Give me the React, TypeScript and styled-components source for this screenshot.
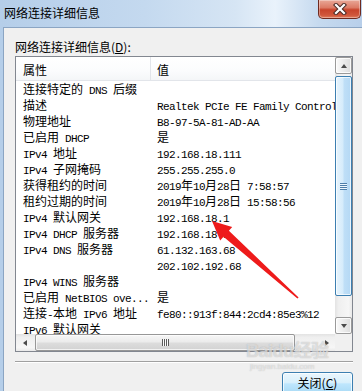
import React from "react";
import styled, { createGlobalStyle } from "styled-components";

const CJK = `"Noto Sans CJK SC", "Noto Sans", sans-serif`;

const GlobalStyle = createGlobalStyle`
  html, body { margin: 0; padding: 0; }
  body { width: 362px; height: 391px; overflow: hidden; background: #f0f0f0; }
`;

const rows: [string, string][] = [
  ["连接特定的 DNS 后缀", ""],
  ["描述", "Realtek PCIe FE Family Controller"],
  ["物理地址", "B8-97-5A-81-AD-AA"],
  ["已启用 DHCP", "是"],
  ["IPv4 地址", "192.168.18.111"],
  ["IPv4 子网掩码", "255.255.255.0"],
  ["获得租约的时间", "2019年10月28日 7:58:57"],
  ["租约过期的时间", "2019年10月28日 15:58:56"],
  ["IPv4 默认网关", "192.168.18.1"],
  ["IPv4 DHCP 服务器", "192.168.18.1"],
  ["IPv4 DNS 服务器", "61.132.163.68"],
  ["", "202.102.192.68"],
  ["IPv4 WINS 服务器", ""],
  ["已启用 NetBIOS ove...", "是"],
  ["连接-本地 IPv6 地址", "fe80::913f:844:2cd4:85e3%12"],
  ["IPv6 默认网关", ""],
];

const Frame = styled.div`
  position: relative;
  width: 362px;
  height: 391px;
  display: flex;
  flex-direction: column;
  overflow: hidden;
  font-family: ${CJK};
  background: linear-gradient(
    90deg,
    #b5cee9 0%,
    #c4d9ef 40%,
    #d6e5f4 65%,
    #e9f2fb 76%,
    #c6daef 88%,
    #b8cfea 100%
  );
`;

const TitleBar = styled.div`
  height: 27px;
  flex-shrink: 0;
  display: flex;
  align-items: flex-start;
`;

const Title = styled.div`
  padding: 5px 0 0 4px;
  font-size: 12px;
  line-height: 16px;
  color: #000;
`;

const CloseButton = styled.div`
  margin-left: auto;
  margin-right: 1px;
  width: 43px;
  height: 19px;
  box-sizing: border-box;
  border: 1px solid #6e2a20;
  border-top: none;
  border-radius: 0 0 5px 5px;
  background: linear-gradient(#e9a898 0%, #dc7b66 42%, #c8432b 55%, #d0573c 85%, #e07d5d 100%);
  box-shadow: inset 0 0 0 1px rgba(255, 255, 255, 0.35);
  display: flex;
  align-items: center;
  justify-content: center;
`;

const Body = styled.div`
  flex: 1;
  margin-left: 3px;
  border-left: 1px solid #8ba5c3;
  border-top: 1px solid #8ba5c3;
  background: #f0f0f0;
  padding: 11px 9px 0 11px;
  display: flex;
  flex-direction: column;
`;

const FieldLabel = styled.div`
  font-size: 12px;
  line-height: 16px;
  color: #000;
  margin-bottom: 1px;
`;

const ListBox = styled.div`
  height: 296px;
  flex-shrink: 0;
  box-sizing: border-box;
  border: 1px solid #828790;
  background: #fff;
  display: grid;
  grid-template-columns: 1fr 17px;
  grid-template-rows: 1fr 17px;
`;

const Viewport = styled.div`
  overflow: hidden;
  min-width: 0;
`;

const Header = styled.div`
  height: 24px;
  box-sizing: border-box;
  display: grid;
  grid-template-columns: 135px 1fr;
  border-bottom: 1px solid #e2e5ea;
  background: linear-gradient(#ffffff, #fbfcfd 60%, #f4f6f8);
`;

const HeaderCell = styled.div<{ $first?: boolean }>`
  font-size: 12px;
  line-height: 23px;
  padding: 1px 0 0 ${(p) => (p.$first ? 7 : 6)}px;
  color: #000;
  border-right: ${(p) => (p.$first ? "1px solid #e2e5ea" : "none")};
`;

const Row = styled.div`
  height: 16px;
  display: grid;
  grid-template-columns: 135px 1fr;
`;

const Cell = styled.div<{ $first?: boolean }>`
  font-size: 12px;
  line-height: 16px;
  color: #000;
  white-space: nowrap;
  overflow: ${(p) => (p.$first ? "hidden" : "visible")};
  padding-left: ${(p) => (p.$first ? 7 : 6)}px;
`;

const Latin = styled.span`
  font-family: "Liberation Mono", monospace;
  font-size: 11px;
  letter-spacing: -0.6px;
  white-space: pre;
`;

const ScrollTrack = styled.div<{ $vertical?: boolean }>`
  display: flex;
  flex-direction: ${(p) => (p.$vertical ? "column" : "row")};
  background: ${(p) =>
    p.$vertical
      ? "linear-gradient(90deg, #e3e3e3 0%, #efefef 20%, #f6f6f6 80%, #e9e9e9 100%)"
      : "linear-gradient(#e3e3e3 0%, #efefef 20%, #f6f6f6 80%, #e9e9e9 100%)"};
`;

const ArrowButton = styled.div<{ $framed?: boolean }>`
  width: 17px;
  height: 17px;
  flex-shrink: 0;
  box-sizing: border-box;
  display: flex;
  align-items: center;
  justify-content: center;
  border: 1px solid ${(p) => (p.$framed ? "#9a9a9a" : "transparent")};
  border-radius: 2px;
  background: ${(p) =>
    p.$framed ? "linear-gradient(90deg, #fafafa, #ebebeb 50%, #dcdcdc)" : "transparent"};
  box-shadow: ${(p) => (p.$framed ? "inset 0 0 0 1px rgba(255,255,255,0.8)" : "none")};
`;

const Tri = styled.span<{ $dir: "up" | "down" | "left" | "right" }>`
  width: 0;
  height: 0;
  border-style: solid;
  border-color: transparent;
  ${(p) =>
    p.$dir === "up"
      ? "border-width: 0 3.5px 4px 3.5px; border-bottom-color: #4a4a4a;"
      : p.$dir === "down"
      ? "border-width: 4px 3.5px 0 3.5px; border-top-color: #4a4a4a;"
      : p.$dir === "left"
      ? "border-width: 3.5px 4px 3.5px 0; border-right-color: #4a4a4a;"
      : "border-width: 3.5px 0 3.5px 4px; border-left-color: #4a4a4a;"}
`;

const Thumb = styled.div<{ $vertical?: boolean; $size: number }>`
  flex-shrink: 0;
  box-sizing: border-box;
  display: flex;
  align-items: center;
  justify-content: center;
  border-radius: 2px;
  ${(p) =>
    p.$vertical
      ? `
    width: 17px;
    height: ${p.$size}px;
    margin-top: 2px;
    border: 1px solid #3c7fb1;
    background: linear-gradient(90deg, #e7f4fd 0%, #d6ecfb 45%, #bfdff7 55%, #b4d8f4 100%);
    box-shadow: inset 0 0 0 1px rgba(255,255,255,0.7);
  `
      : `
    height: 17px;
    width: ${p.$size}px;
    margin-left: 2px;
    border: 1px solid #979797;
    background: linear-gradient(#f6f6f6 0%, #ececec 45%, #dcdcdc 55%, #d2d2d2 100%);
    box-shadow: inset 0 0 0 1px rgba(255,255,255,0.7);
  `}
`;

const Grip = styled.span<{ $vertical?: boolean }>`
  display: block;
  ${(p) =>
    p.$vertical
      ? "width: 7px; height: 7px; background: repeating-linear-gradient(#4f7ea8 0 1px, #eef7fe 1px 2px);"
      : "width: 7px; height: 7px; background: repeating-linear-gradient(90deg, #5a5a5a 0 1px, #fafafa 1px 2px);"}
`;

const Spacer = styled.div`
  flex: 1;
`;

const Corner = styled.div`
  background: #f0f0f0;
`;

const Separator = styled.div`
  margin-top: 9px;
  border-top: 1px solid #a0a0a0;
  border-bottom: 1px solid #ffffff;
`;

const ButtonRow = styled.div`
  margin-top: 9px;
  display: flex;
  justify-content: flex-end;
`;

const PushButton = styled.div`
  width: 71px;
  height: 23px;
  box-sizing: border-box;
  border: 1px solid #3c7fb1;
  border-radius: 3px;
  background: linear-gradient(#eaf6fd 0%, #d9f0fc 45%, #bee6fd 52%, #a7d9f5 100%);
  box-shadow: inset 0 0 0 1px rgba(255, 255, 255, 0.75);
  font-size: 12px;
  line-height: 19px;
  text-align: center;
  color: #000;
`;

const Overlay = styled.svg`
  position: absolute;
  left: 0;
  top: 0;
  pointer-events: none;
`;

const Watermark = styled.div`
  position: absolute;
  left: 246px;
  top: 342px;
  pointer-events: none;
  color: rgba(255, 255, 255, 0.55);
  text-shadow: 0 0 1px rgba(120, 120, 120, 0.55);
  font-family: "Liberation Sans", ${CJK};
  font-weight: bold;
  line-height: 1;
`;

const WatermarkMain = styled.div`
  font-size: 18px;
  letter-spacing: -0.5px;
`;

const WatermarkSub = styled.div`
  font-size: 8px;
  font-weight: normal;
  margin-top: 3px;
  padding-left: 4px;
`;

function Mixed({ text }: { text: string }) {
  return (
    <>
      {text
        .split(/([\x20-\x7e]+)/)
        .map((part, i) => (i % 2 ? <Latin key={i}>{part}</Latin> : part))}
    </>
  );
}

export default function App() {
  return (
    <>
      <GlobalStyle />
      <Frame>
        <TitleBar>
          <Title>网络连接详细信息</Title>
          <CloseButton>
            <svg width="14" height="12" viewBox="0 0 14 12">
              <path d="M3 2 L11 10 M11 2 L3 10" stroke="#4a2a26" strokeWidth="4.2" strokeLinecap="square" />
              <path d="M3 2 L11 10 M11 2 L3 10" stroke="#ffffff" strokeWidth="2.2" strokeLinecap="square" />
            </svg>
          </CloseButton>
        </TitleBar>
        <Body>
          <FieldLabel>
            网络连接详细信息(<u>D</u>):
          </FieldLabel>
          <ListBox>
            <Viewport>
              <Header>
                <HeaderCell $first>属性</HeaderCell>
                <HeaderCell>值</HeaderCell>
              </Header>
              {rows.map(([name, value], i) => (
                <Row key={i}>
                  <Cell $first>
                    <Mixed text={name} />
                  </Cell>
                  <Cell>
                    <Mixed text={value} />
                  </Cell>
                </Row>
              ))}
            </Viewport>
            <ScrollTrack $vertical>
              <ArrowButton $framed>
                <Tri $dir="up" />
              </ArrowButton>
              <Thumb $vertical $size={220}>
                <Grip $vertical />
              </Thumb>
              <Spacer />
              <ArrowButton $framed>
                <Tri $dir="down" />
              </ArrowButton>
            </ScrollTrack>
            <ScrollTrack>
              <ArrowButton>
                <Tri $dir="left" />
              </ArrowButton>
              <Thumb $size={260}>
                <Grip />
              </Thumb>
              <Spacer />
              <ArrowButton>
                <Tri $dir="right" />
              </ArrowButton>
            </ScrollTrack>
            <Corner />
          </ListBox>
          <Separator />
          <ButtonRow>
            <PushButton>
              关闭(<u>C</u>)
            </PushButton>
          </ButtonRow>
        </Body>
        <Watermark>
          <WatermarkMain>Baidu经验</WatermarkMain>
          <WatermarkSub>jingyan.baidu.com</WatermarkSub>
        </Watermark>
        <Overlay width="362" height="391" viewBox="0 0 362 391">
          <polygon
            points="212,221 232.2,227 228.9,230.7 298.6,297.5 297.4,298.5 223.5,236.7 220.2,240.4"
            fill="#ee1b1b"
          />
        </Overlay>
      </Frame>
    </>
  );
}
